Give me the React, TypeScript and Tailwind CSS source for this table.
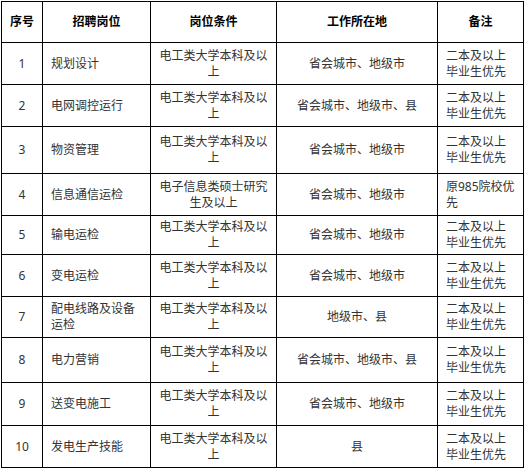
import React from 'react';

interface Job {
  no: string;
  title: string;
  req: string;
  place: string;
  note: string;
  h: string;
}

const jobs: Job[] = [
  { no: '1', title: '规划设计', req: '电工类大学本科及以上', place: '省会城市、地级市', note: '二本及以上毕业生优先', h: 'h-[42px]' },
  { no: '2', title: '电网调控运行', req: '电工类大学本科及以上', place: '省会城市、地级市、县', note: '二本及以上毕业生优先', h: 'h-[42px]' },
  { no: '3', title: '物资管理', req: '电工类大学本科及以上', place: '省会城市、地级市', note: '二本及以上毕业生优先', h: 'h-[47px]' },
  { no: '4', title: '信息通信运检', req: '电子信息类硕士研究生及以上', place: '省会城市、地级市', note: '原985院校优先', h: 'h-[42px]' },
  { no: '5', title: '输电运检', req: '电工类大学本科及以上', place: '省会城市、地级市', note: '二本及以上毕业生优先', h: 'h-[39px]' },
  { no: '6', title: '变电运检', req: '电工类大学本科及以上', place: '省会城市、地级市', note: '二本及以上毕业生优先', h: 'h-[42px]' },
  { no: '7', title: '配电线路及设备运检', req: '电工类大学本科及以上', place: '地级市、县', note: '二本及以上毕业生优先', h: 'h-[41px]' },
  { no: '8', title: '电力营销', req: '电工类大学本科及以上', place: '省会城市、地级市、县', note: '二本及以上毕业生优先', h: 'h-[45px]' },
  { no: '9', title: '送变电施工', req: '电工类大学本科及以上', place: '省会城市、地级市', note: '二本及以上毕业生优先', h: 'h-[43px]' },
  { no: '10', title: '发电生产技能', req: '电工类大学本科及以上', place: '县', note: '二本及以上毕业生优先', h: 'h-[42px]' },
];

const cell = 'flex items-center border-r border-b border-black px-2 leading-[16px]';

export default function App() {
  return (
    <div className="min-h-[471px] w-[527px] bg-white pl-px pt-px font-['Noto_Sans','Noto_Sans_CJK_SC',sans-serif] text-[12px] text-[#333]">
      <div className="grid w-[523px] grid-cols-[41px_108px_126px_161px_86px] border-l border-t border-black">
        {['序号', '招聘岗位', '岗位条件', '工作所在地', '备注'].map((t) => (
          <div key={t} className={`${cell} h-[41px] justify-center font-bold text-black`}>
            {t}
          </div>
        ))}
        {jobs.map((j) => (
          <React.Fragment key={j.no}>
            <div className={`${cell} ${j.h} justify-center`}>{j.no}</div>
            <div className={`${cell} ${j.h}`}>{j.title}</div>
            <div className={`${cell} ${j.h} justify-center text-center`}>{j.req}</div>
            <div className={`${cell} ${j.h} justify-center text-center`}>{j.place}</div>
            <div className={`${cell} ${j.h}`}>{j.note}</div>
          </React.Fragment>
        ))}
      </div>
    </div>
  );
}
